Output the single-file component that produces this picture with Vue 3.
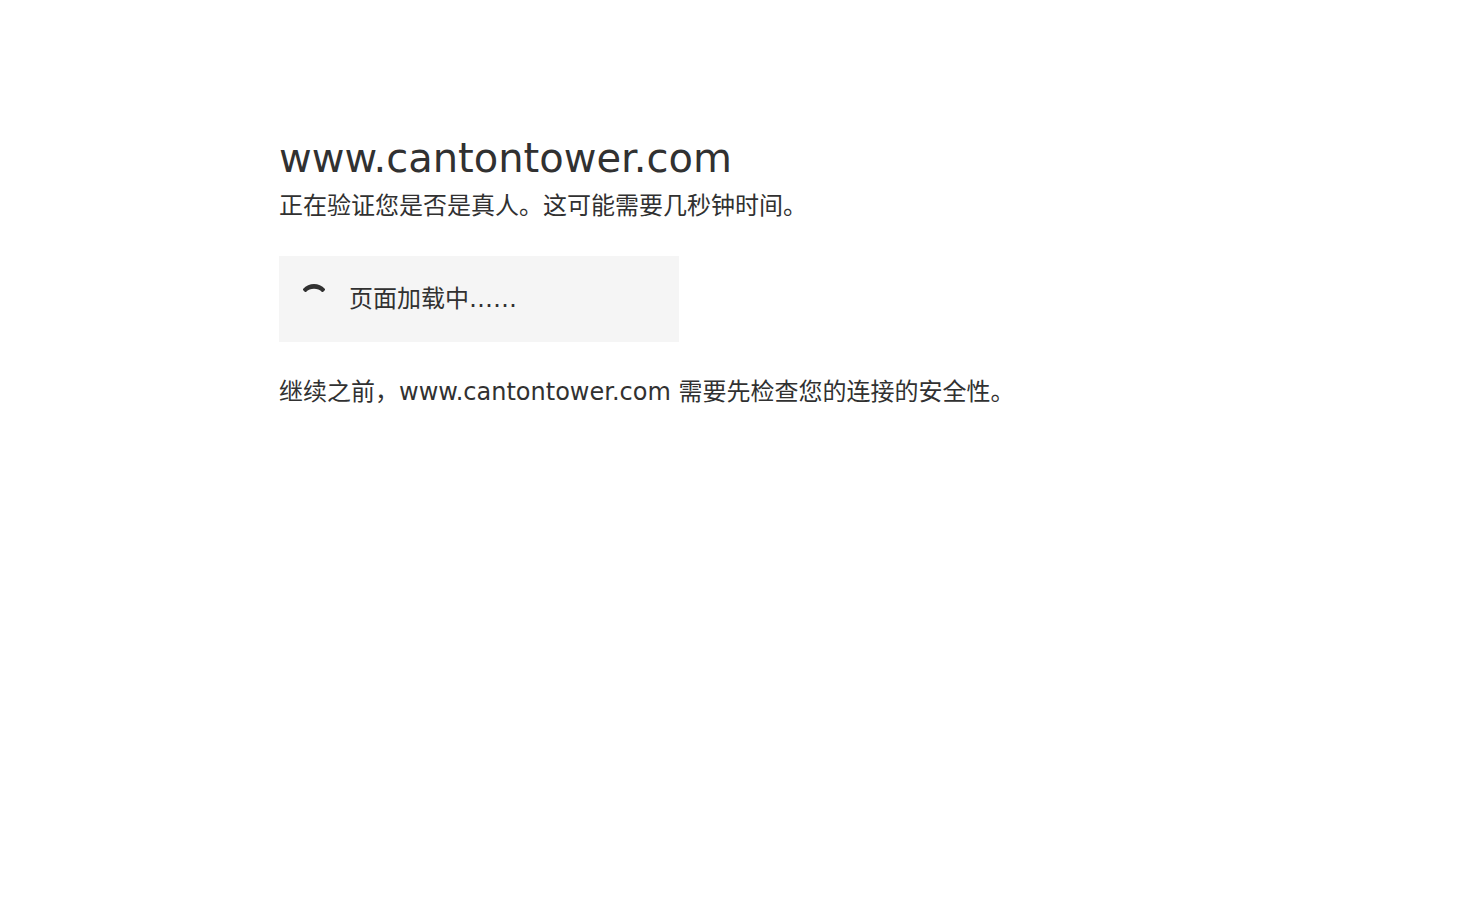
<script setup>
const host = 'www.cantontower.com'
</script>

<template>
  <main class="page">
    <h1 class="host">{{ host }}</h1>
    <p class="text">正在验证您是否是真人。这可能需要几秒钟时间。</p>
    <div class="status" role="status">
      <svg class="spinner" viewBox="0 0 30 30" aria-hidden="true">
        <path d="M4 5 C7 1.500 11 0 15 0 C19 0 23 1.500 26 5 L26 6 L24 8 L23 8 C21 6 18 4.800 15 4.800 C12 4.800 9 6 7 8 L6 8 L4 6 Z" />
      </svg>
      <span>页面加载中……</span>
    </div>
    <p class="text">继续之前，{{ host }} 需要先检查您的连接的安全性。</p>
  </main>
</template>

<style>
body {
  margin: 0;
  background: #fff;
}
</style>

<style scoped>
.page {
  box-sizing: border-box;
  max-width: 960px;
  margin: 128px auto 0;
  padding: 0 24px;
  color: #313131;
  font-family: "DejaVu Sans", "Noto Sans CJK SC", sans-serif;
  font-size: 24px;
  line-height: 36px;
}
.host {
  margin: 0;
  font-size: 40px;
  font-weight: 400;
  line-height: 60px;
}
.text {
  margin: 0;
}
.status {
  box-sizing: border-box;
  display: flex;
  align-items: center;
  gap: 20px;
  width: 400px;
  max-width: 100%;
  height: 86px;
  margin: 32px 0;
  padding: 0 20px;
  background: #f5f5f5;
}
.spinner {
  width: 30px;
  height: 30px;
  fill: #313131;
}
</style>
